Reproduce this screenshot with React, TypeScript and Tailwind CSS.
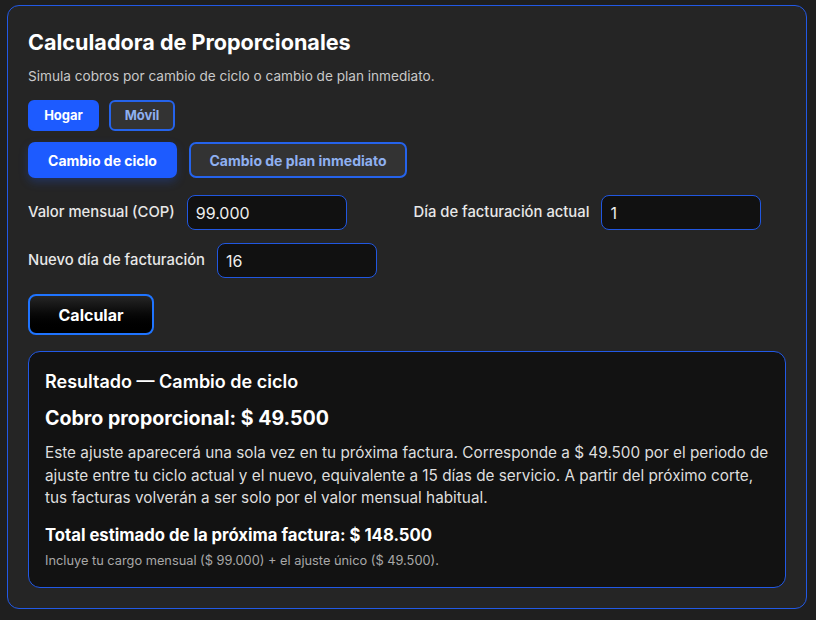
import { useState } from 'react';

export default function App() {
  const [service, setService] = useState<'hogar' | 'movil'>('hogar');
  const [mode, setMode] = useState<'ciclo' | 'plan'>('ciclo');
  const [monthly, setMonthly] = useState('99.000');
  const [currentDay, setCurrentDay] = useState('1');
  const [newDay, setNewDay] = useState('16');

  const activeSm = 'bg-[#1d5bff] text-white border-2 border-[#1d5bff]';
  const idleSm = 'bg-[#333333] text-[#8fb0f0] border-2 border-[#2563eb]';
  const inputCls =
    'h-[35px] w-[160px] rounded-[8px] border border-[#2157e0] bg-[#111111] px-[8px] text-[16px] font-normal text-[#eeeeee] outline-none';

  return (
    <div className="min-h-screen bg-[#1f1f1f] pt-[5px] pl-[7px] font-['Inter',sans-serif]">
      <div className="w-[800px] h-[604px] rounded-[12px] border border-[#2259e6] bg-[#252525] p-5">
        <h1 className="text-[21.6px] leading-[32px] font-bold text-white">Calculadora de Proporcionales</h1>
        <p className="mt-2 text-[13.6px] leading-[20px] text-[#c9c9c9]">
          Simula cobros por cambio de ciclo o cambio de plan inmediato.
        </p>

        <div className="mt-[14px] flex gap-[10px]">
          <button
            onClick={() => setService('hogar')}
            className={`h-[31px] w-[71px] rounded-[6px] text-[13px] font-bold ${service === 'hogar' ? activeSm : idleSm}`}
          >
            Hogar
          </button>
          <button
            onClick={() => setService('movil')}
            className={`h-[31px] w-[66px] rounded-[6px] text-[13px] font-bold ${service === 'movil' ? activeSm : idleSm}`}
          >
            Móvil
          </button>
        </div>

        <div className="mt-[11px] flex gap-3">
          <button
            onClick={() => setMode('ciclo')}
            className={`h-[36px] w-[149px] rounded-[7px] text-[14px] font-bold ${mode === 'ciclo' ? activeSm + ' shadow-[0_4px_10px_rgba(29,91,255,0.25)]' : idleSm}`}
          >
            Cambio de ciclo
          </button>
          <button
            onClick={() => setMode('plan')}
            className={`h-[36px] w-[218px] rounded-[7px] text-[14px] font-bold ${mode === 'plan' ? activeSm : idleSm}`}
          >
            Cambio de plan inmediato
          </button>
        </div>

        <div className="mt-[17px] grid grid-cols-2 gap-x-[13px] gap-y-[13px]">
          <label className="flex items-center gap-3 text-[14.8px] font-medium text-[#e8e8e8]">
            Valor mensual (COP)
            <input value={monthly} onChange={(e) => setMonthly(e.target.value)} className={inputCls} />
          </label>
          <label className="flex items-center gap-3 text-[14.8px] font-medium text-[#e8e8e8]">
            Día de facturación actual
            <input value={currentDay} onChange={(e) => setCurrentDay(e.target.value)} className={inputCls} />
          </label>
          <label className="flex items-center gap-3 text-[14.8px] font-medium text-[#e8e8e8]">
            Nuevo día de facturación
            <input value={newDay} onChange={(e) => setNewDay(e.target.value)} className={inputCls} />
          </label>
        </div>

        <button className="mt-4 h-[41px] w-[126px] rounded-[8px] border-2 border-[#1f74ff] bg-gradient-to-b from-[#262626] to-[#000000] text-[16px] font-bold text-white">
          Calcular
        </button>

        <div className="mt-4 rounded-[12px] border border-[#2259e6] bg-[#121212] px-4 pt-4 pb-[17px]">
          <h2 className="text-[18px] leading-[28px] font-semibold text-white">Resultado — Cambio de ciclo</h2>
          <h3 className="mt-[8px] text-[19.6px] leading-[28px] font-bold text-white">Cobro proporcional: $ 49.500</h3>
          <p className="mt-[10px] text-[15.3px] leading-[22.5px] text-[#dedede]">
            Este ajuste aparecerá una sola vez en tu próxima factura. Corresponde a $ 49.500 por el periodo de ajuste
            entre tu ciclo actual y el nuevo, equivalente a 15 días de servicio. A partir del próximo corte, tus
            facturas volverán a ser solo por el valor mensual habitual.
          </p>
          <p className="mt-[13px] text-[16.7px] leading-[24px] font-bold text-white">
            Total estimado de la próxima factura: $ 148.500
          </p>
          <p className="mt-[5px] text-[12.8px] leading-[18px] text-[#a8a8a8]">
            Incluye tu cargo mensual ($ 99.000) + el ajuste único ($ 49.500).
          </p>
        </div>
      </div>
    </div>
  );
}
